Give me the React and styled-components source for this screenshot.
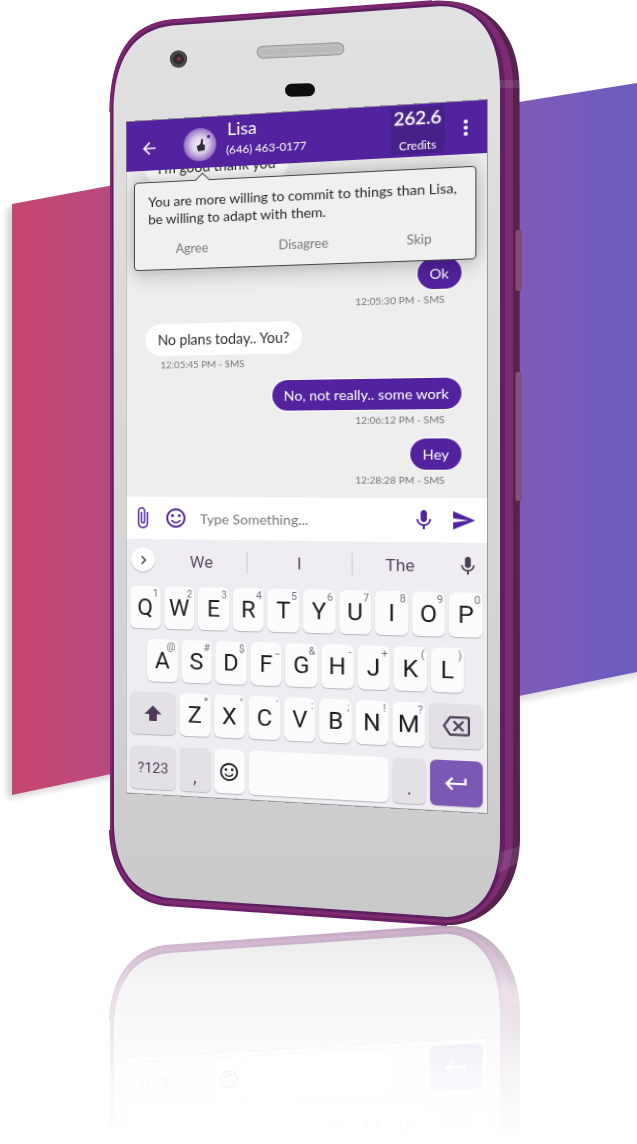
import React from 'react';
import styled, { createGlobalStyle } from 'styled-components';
import {
  MdArrowBack, MdMoreVert, MdMic, MdSend, MdKeyboardArrowRight,
  MdOutlineBackspace, MdKeyboardReturn, MdOutlineSentimentSatisfiedAlt, MdAttachFile,
} from 'react-icons/md';

const W = 360;
const H = 700;

function quadMatrix([x0, y0], [x1, y1], [x2, y2], [x3, y3]) {
  const dx1 = x1 - x2, dx2 = x3 - x2, dx3 = x0 - x1 + x2 - x3;
  const dy1 = y1 - y2, dy2 = y3 - y2, dy3 = y0 - y1 + y2 - y3;
  const det = dx1 * dy2 - dx2 * dy1;
  const g = (dx3 * dy2 - dx2 * dy3) / det;
  const h = (dx1 * dy3 - dx3 * dy1) / det;
  const a = x1 - x0 + g * x1, b = x3 - x0 + h * x3;
  const d = y1 - y0 + g * y1, e = y3 - y0 + h * y3;
  const m = [a / W, d / W, 0, g / W, b / H, e / H, 0, h / H, 0, 0, 1, 0, x0, y0, 0, 1];
  return `matrix3d(${m.map((n) => n.toFixed(9)).join(',')})`;
}

const SCREEN_TRANSFORM = quadMatrix([126.5, 122], [487, 100], [487, 813], [126.5, 792.5]);

const Global = createGlobalStyle`
  html, body { margin: 0; padding: 0; background: #fff; }
`;

const Stage = styled.div`
  position: relative;
  width: 637px;
  height: 1144px;
  overflow: hidden;
  background: #fff;
`;

const Backdrop = styled.svg`
  position: absolute;
  left: 0;
  top: 0;
`;

const PhoneFrame = styled.div`
  position: absolute;
  left: 0;
  top: 0;
  width: 637px;
  height: 1144px;
`;

const Mirror = styled(PhoneFrame)`
  transform-origin: 0 925.5px;
  transform: scaleY(-1);
  -webkit-mask-image: linear-gradient(to bottom, rgba(0,0,0,0) 710px, rgba(0,0,0,0.05) 780px, rgba(0,0,0,0.16) 860px, rgba(0,0,0,0.4) 926px);
  mask-image: linear-gradient(to bottom, rgba(0,0,0,0) 710px, rgba(0,0,0,0.05) 780px, rgba(0,0,0,0.16) 860px, rgba(0,0,0,0.4) 926px);
`;

const Body = styled.svg`
  position: absolute;
  left: 0;
  top: 0;
`;

const Screen = styled.div`
  position: absolute;
  left: 0;
  top: 0;
  width: ${W}px;
  height: ${H}px;
  transform-origin: 0 0;
  transform: ${SCREEN_TRANSFORM};
  display: flex;
  flex-direction: column;
  background: #eeeeee;
  overflow: hidden;
  font-family: Lato, "Open Sans", sans-serif;
  box-shadow: 0 0 0 1px #9a9a9a;
`;

const Header = styled.header`
  position: relative;
  z-index: 2;
  flex: 0 0 52px;
  display: flex;
  align-items: stretch;
  background: #53229f;
  color: #fff;
`;

const BackBtn = styled.div`
  width: 60px;
  padding-left: 14px;
  box-sizing: border-box;
  display: flex;
  align-items: center;
  font-size: 20px;
  padding-top: 6px;
`;

const Avatar = styled.div`
  position: relative;
  flex: none;
  width: 34px;
  height: 34px;
  margin-top: 11px;
  border-radius: 50%;
  background: radial-gradient(circle, #f6f2fa 0%, #ddd0ea 35%, #7a4fb5 80%, #5a2ba3 100%);
  display: flex;
  align-items: center;
  justify-content: center;
`;

const AvatarDot = styled.span`
  position: absolute;
  right: 5px;
  top: 6px;
  width: 6px;
  height: 6px;
  border-radius: 50%;
  background: #4426a0;
  border: 1px solid #e9e2f4;
  box-sizing: border-box;
`;

const Contact = styled.div`
  margin-left: 11px;
  flex: 1;
  display: flex;
  flex-direction: column;
  padding-top: 2px;
`;

const Name = styled.div`
  font-size: 18px;
  line-height: 22px;
`;

const Phone = styled.div`
  font-size: 11.7px;
  line-height: 18px;
  margin-top: 1px;
  margin-left: -1px;
`;

const Credits = styled.div`
  flex: none;
  width: 52px;
  margin: 2px 0 3px;
  border-radius: 3px;
  background: #47208a;
  display: flex;
  flex-direction: column;
  align-items: center;
`;

const CreditValue = styled.div`
  font-size: 18px;
  line-height: 22px;
  text-shadow: 0 0 2px rgba(255, 255, 255, 0.6);
`;

const CreditLabel = styled.div`
  font-size: 11.5px;
  line-height: 14px;
  margin-top: 10px;
`;

const Kebab = styled.div`
  width: 40px;
  display: flex;
  align-items: center;
  justify-content: center;
  font-size: 24px;
`;

const Messages = styled.div`
  flex: 0 0 339px;
  min-height: 0;
  overflow: hidden;
  display: flex;
  flex-direction: column;
  justify-content: flex-end;
  padding: 0 0 11px;
  box-sizing: border-box;
`;

const Msg = styled.div`
  display: flex;
  flex-direction: column;
  flex: none;
  align-items: ${(p) => (p.$mine ? 'flex-end' : 'flex-start')};
  padding: ${(p) => (p.$mine ? '0 24px 0 0' : '0 0 0 21px')};
  margin-bottom: ${(p) => p.$after ?? 11}px;

  &:last-child {
    margin-bottom: 0;
  }
`;

const Bubble = styled.div`
  height: 31px;
  box-sizing: border-box;
  padding: 0 12px;
  display: flex;
  align-items: center;
  border-radius: 15.5px;
  font-size: ${(p) => (p.$mine ? 14.2 : 14.5)}px;
  white-space: nowrap;
  background: ${(p) => (p.$mine ? '#53229f' : '#ffffff')};
  color: ${(p) => (p.$mine ? '#ffffff' : '#2c2c2c')};
  box-shadow: 0 0 0 1px #fff;
`;

const Stamp = styled.div`
  font-size: 10px;
  line-height: 14px;
  margin-top: 3px;
  color: #777;
  white-space: nowrap;
  padding: ${(p) => (p.$mine ? '0 16px 0 0' : '0 0 0 15px')};
`;

const Popover = styled.div`
  position: absolute;
  z-index: 1;
  left: 8px;
  top: 64px;
  width: 342px;
  height: 92px;
  box-sizing: border-box;
  background: #f0f0f0;
  border: 1px solid #444;
  border-radius: 4px;
  box-shadow: 0 10px 18px rgba(0, 0, 0, 0.13), 0 -10px 20px rgba(0, 0, 0, 0.1), 0 0 14px rgba(0,0,0,0.1);
  padding: 11px 14px 0;
  display: flex;
  flex-direction: column;

  &::before {
    content: '';
    position: absolute;
    left: 65px;
    top: -6px;
    width: 10px;
    height: 10px;
    background: #f0f0f0;
    border-left: 1px solid #444;
    border-top: 1px solid #444;
    transform: rotate(45deg);
  }
`;

const Advice = styled.div`
  font-size: 14px;
  line-height: 18px;
  color: #2a2a2a;
  white-space: nowrap;
`;

const Choices = styled.div`
  margin: 14px -14px 0;
  padding-left: 3px;
  display: grid;
  grid-template-columns: repeat(3, 113.4px);
`;

const Choice = styled.div`
  text-align: center;
  font-size: 13px;
  line-height: 16px;
  color: #7a7a7a;
`;

const InputBar = styled.div`
  flex: 0 0 44px;
  background: #fff;
  display: flex;
  align-items: center;
  position: relative;
  z-index: 1;
  color: #4f22a3;
  font-size: 24px;
  padding: 0 5px 0 5px;
  gap: 4px;
`;

const IconSlot = styled.div`
  flex: none;
  width: ${(p) => p.$w}px;
  margin-left: ${(p) => p.$ml || 0}px;
  display: flex;
  align-items: center;
  justify-content: center;
`;

const Placeholder = styled.div`
  flex: 1;
  margin-left: 6px;
  font-size: 14.2px;
  color: #777;
`;

const Keyboard = styled.div`
  flex: 1;
  min-height: 0;
  background: #efecf2;
  display: flex;
  flex-direction: column;
  font-family: Roboto, sans-serif;
  color: #5a4a63;
`;

const Suggestions = styled.div`
  flex: 0 0 49px;
  position: relative;
  display: flex;
  align-items: center;
`;

const Chevron = styled.div`
  position: absolute;
  left: 5px;
  top: 9px;
  width: 25px;
  height: 25px;
  border-radius: 50%;
  background: #fff;
  box-shadow: 0 1px 1px rgba(0, 0, 0, 0.25);
  display: flex;
  align-items: center;
  justify-content: center;
  font-size: 18px;
  color: #4a3c52;
`;

const Suggest = styled.div`
  flex: none;
  box-sizing: border-box;
  width: ${(p) => p.$w}px;
  margin-left: ${(p) => p.$ml || 0}px;
  text-align: center;
  font-size: 17px;
  border-right: ${(p) => (p.$div ? '1px solid #cfcbd3' : '0')};
  height: 22px;
  line-height: 22px;
  margin-top: -4px;
`;

const SuggestMic = styled.div`
  position: absolute;
  right: 7px;
  top: 12px;
  font-size: 22px;
  color: #4a3c52;
`;

const KeyRow = styled.div`
  flex: 0 0 ${(p) => p.$h || 44}px;
  display: flex;
  gap: 4px;
  padding: ${(p) => (p.$inset ? '0 22px' : '0 4px')};
  margin-bottom: ${(p) => p.$mb ?? 11}px;
`;

const Key = styled.div`
  position: relative;
  flex: ${(p) => (p.$w ? `0 0 ${p.$w}px` : '1 1 0')};
  box-sizing: border-box;
  display: flex;
  align-items: ${(p) => (p.$low ? 'flex-end' : 'center')};
  padding-bottom: ${(p) => (p.$low ? '5px' : '0')};
  justify-content: center;
  border-radius: 6px;
  background: ${(p) => (p.$tone === 'dark' ? '#e3e0e6' : p.$tone === 'accent' ? '#7b58b4' : '#fdfcfd')};
  box-shadow: 0 1px 1px rgba(90, 80, 100, 0.35);
  color: ${(p) => (p.$tone === 'dark' ? '#4e3f58' : p.$tone === 'accent' ? '#fff' : '#1f1f23')};
  font-size: ${(p) => p.$size || 24}px;
`;

const Hint = styled.span`
  position: absolute;
  right: 2px;
  top: 2px;
  font-size: 10.5px;
  line-height: 12px;
  color: #77707c;
`;

const Smile = () => <MdOutlineSentimentSatisfiedAlt />;

const ROW1 = [['Q', '1'], ['W', '2'], ['E', '3'], ['R', '4'], ['T', '5'], ['Y', '6'], ['U', '7'], ['I', '8'], ['O', '9'], ['P', '0']];
const ROW2 = [['A', '@'], ['S', '#'], ['D', '$'], ['F', '_'], ['G', '&'], ['H', '-'], ['J', '+'], ['K', '('], ['L', ')']];
const ROW3 = [['Z', '*'], ['X', '"'], ['C', "'"], ['V', ':'], ['B', ';'], ['N', '!'], ['M', '?']];

const LetterKey = ({ k }) => (
  <Key $w={31.6}>
    {k[0]}
    <Hint>{k[1]}</Hint>
  </Key>
);

const OUTER = 'M110 110 C111 55 130 24 172 20 L432 1 C485 -3 518 30 519.5 85 L520 840 C519 890 490 925 447 925 L165 905 C130 900 111 870 110 830 Z';
const MID = 'M110 110 C111 55 130 24 172 20 L432 1 C480 -3 512 30 513 85 L513 840 C512 885 485 923 447 923 L165 904 C130 899 111 870 110 830 Z';
const INNER = 'M112 110 C113 58 132 27 172 23 L433 4 C478 1 504 33 505 85 L505 840 C504 885 482 920 447 920 L168 900 C134 897 113 870 112 828 Z';
const FACE = 'M113.5 110 C114 60 133 30 172 25.5 L435 6.5 C478 3 499 35 500 85 L500 840 C499 888 480 916 447 917 L170 898 C135 895 115 870 114 826 Z';

const PhoneBody = () => (
  <Body width="637" height="1144" viewBox="0 0 637 1144">
    <defs>
      <linearGradient id="face" x1="0" y1="0" x2="0" y2="1">
        <stop offset="0" stopColor="#e1e1e1" />
        <stop offset="0.75" stopColor="#d2d2d2" />
        <stop offset="1" stopColor="#c9c9c9" />
      </linearGradient>
    </defs>
    <rect x="515.5" y="229" width="6" height="63" rx="2.5" fill="#7d4674" />
    <rect x="515.5" y="371" width="6" height="131" rx="2.5" fill="#7d4a78" />
    <path d={OUTER} fill="#56234f" />
    <path d={MID} fill="#7d2a70" />
    <path d={INNER} fill="#5f1f62" />
    <path d={FACE} fill="url(#face)" />
    <path d="M110 112 C111 55 130 24 172 20 L432 1" fill="none" stroke="#7a2372" strokeWidth="1.5" />
    <path d="M110 830 C111 870 130 900 165 905 L447 925" fill="none" stroke="#6e1d6c" strokeWidth="2" />
    <rect x="515.5" y="230" width="5" height="61" rx="2" fill="#80507a" />
    <rect x="515.5" y="372" width="5" height="129" rx="2" fill="#835380" />
    <rect x="500" y="80" width="20" height="8" fill="#fff" opacity="0.1" />
    <path d="M500 852 L520 846 L520 862 L497 874 Z" fill="#fff" opacity="0.1" />
    <circle cx="178.5" cy="59" r="8.7" fill="#4a4a4a" />
    <circle cx="178.5" cy="59" r="5.4" fill="#2f2a2d" />
    <circle cx="179" cy="59" r="2.3" fill="#6b3450" />
    <g transform="rotate(-2.6 300 50.5)">
      <rect x="257" y="44.5" width="87" height="12" rx="6" fill="#b9b9b9" stroke="#9c9c9c" strokeWidth="1" />
      <rect x="260" y="47" width="81" height="7" rx="3.5" fill="none" stroke="#cfcfcf" strokeWidth="1" strokeDasharray="1 1" />
    </g>
    <rect x="285" y="83.5" width="30" height="13" rx="6.5" fill="#0d0d0d" transform="rotate(-2 300 90)" />
  </Body>
);

const Handset = () => (
  <PhoneFrame>
    <PhoneBody />
    <Screen>
      <Header>
        <BackBtn><MdArrowBack /></BackBtn>
        <Avatar>
          <svg width="11" height="15" viewBox="0 0 14 18">
            <path d="M8 1 L10.5 1.5 L10 8 L13 9 L12.5 16 L4 17 L2 10 L5 9 L7 7 Z" fill="#2f2a36" />
          </svg>
          <AvatarDot />
        </Avatar>
        <Contact>
          <Name>Lisa</Name>
          <Phone>(646) 463-0177</Phone>
        </Contact>
        <Credits>
          <CreditValue>262.6</CreditValue>
          <CreditLabel>Credits</CreditLabel>
        </Credits>
        <Kebab><MdMoreVert /></Kebab>
      </Header>

      <Messages>
        <Msg $after={87}>
          <Bubble>I'm good thank you</Bubble>
        </Msg>
        <Msg $mine $after={12}>
          <Bubble $mine>Ok</Bubble>
          <Stamp $mine>12:05:30 PM - SMS</Stamp>
        </Msg>
        <Msg $after={11}>
          <Bubble>No plans today.. You?</Bubble>
          <Stamp>12:05:45 PM - SMS</Stamp>
        </Msg>
        <Msg $mine $after={12}>
          <Bubble $mine>No, not really.. some work</Bubble>
          <Stamp $mine>12:06:12 PM - SMS</Stamp>
        </Msg>
        <Msg $mine>
          <Bubble $mine>Hey</Bubble>
          <Stamp $mine>12:28:28 PM - SMS</Stamp>
        </Msg>
      </Messages>

      <Popover>
        <Advice>
          You are more willing to commit to things than Lisa,
          <br />
          be willing to adapt with them.
        </Advice>
        <Choices>
          <Choice>Agree</Choice>
          <Choice>Disagree</Choice>
          <Choice>Skip</Choice>
        </Choices>
      </Popover>

      <InputBar>
        <IconSlot $w={24}><MdAttachFile /></IconSlot>
        <IconSlot $w={30} $ml={4}><Smile /></IconSlot>
        <Placeholder>Type Something...</Placeholder>
        <IconSlot $w={24}><MdMic /></IconSlot>
        <IconSlot $w={34} $ml={5}><MdSend /></IconSlot>
      </InputBar>

      <Keyboard>
        <Suggestions>
          <Chevron><MdKeyboardArrowRight /></Chevron>
          <Suggest $w={94} $ml={32} $div>We</Suggest>
          <Suggest $w={105} $div>I</Suggest>
          <Suggest $w={92}>The</Suggest>
          <SuggestMic><MdMic /></SuggestMic>
        </Suggestions>
        <KeyRow>{ROW1.map((k) => <LetterKey key={k[0]} k={k} />)}</KeyRow>
        <KeyRow $inset>{ROW2.map((k) => <LetterKey key={k[0]} k={k} />)}</KeyRow>
        <KeyRow $mb={12}>
          <Key $w={48} $tone="dark">
            <svg width="20" height="20" viewBox="0 0 20 20"><path d="M10 2 L19 11 H14 V18 H6 V11 H1 Z" fill="#4e3a58" /></svg>
          </Key>
          {ROW3.map((k) => <LetterKey key={k[0]} k={k} />)}
          <Key $tone="dark" $size={26}><MdOutlineBackspace /></Key>
        </KeyRow>
        <KeyRow $h={45} $mb={0}>
          <Key $w={48} $tone="dark" $size={15}>?123</Key>
          <Key $w={31.6} $tone="dark" $size={18} $low>,</Key>
          <Key $w={31.6} $size={22}><Smile /></Key>
          <Key />
          <Key $w={31.6} $tone="dark" $size={18} $low>.</Key>
          <Key $w={50} $tone="accent" $size={26}><MdKeyboardReturn /></Key>
        </KeyRow>
      </Keyboard>
    </Screen>
  </PhoneFrame>
);

export default function App() {
  return (
    <Stage>
      <Global />
      <Backdrop width="637" height="1144" viewBox="0 0 637 1144">
        <defs>
          <linearGradient id="pink" gradientUnits="userSpaceOnUse" x1="12" y1="0" x2="115" y2="0">
            <stop offset="0" stopColor="#c6466f" />
            <stop offset="1" stopColor="#b84a80" />
          </linearGradient>
          <linearGradient id="violet" gradientUnits="userSpaceOnUse" x1="520" y1="0" x2="637" y2="0">
            <stop offset="0" stopColor="#7f5ab8" />
            <stop offset="1" stopColor="#6b5cbe" />
          </linearGradient>
          <filter id="soft" x="-20%" y="-20%" width="140%" height="140%">
            <feGaussianBlur stdDeviation="3" />
          </filter>
        </defs>
        <polygon points="7,208 130,186 130,774 7,799" fill="#000" opacity="0.16" filter="url(#soft)" />
        <polygon points="500,110 640,88 640,677 500,705" fill="#000" opacity="0.12" filter="url(#soft)" />
        <polygon points="12,204 130,182 130,770 12,795" fill="url(#pink)" />
        <polygon points="500,105 637,83 637,672 500,700" fill="url(#violet)" />
      </Backdrop>
      <Mirror><Handset /></Mirror>
      <Handset />
    </Stage>
  );
}
